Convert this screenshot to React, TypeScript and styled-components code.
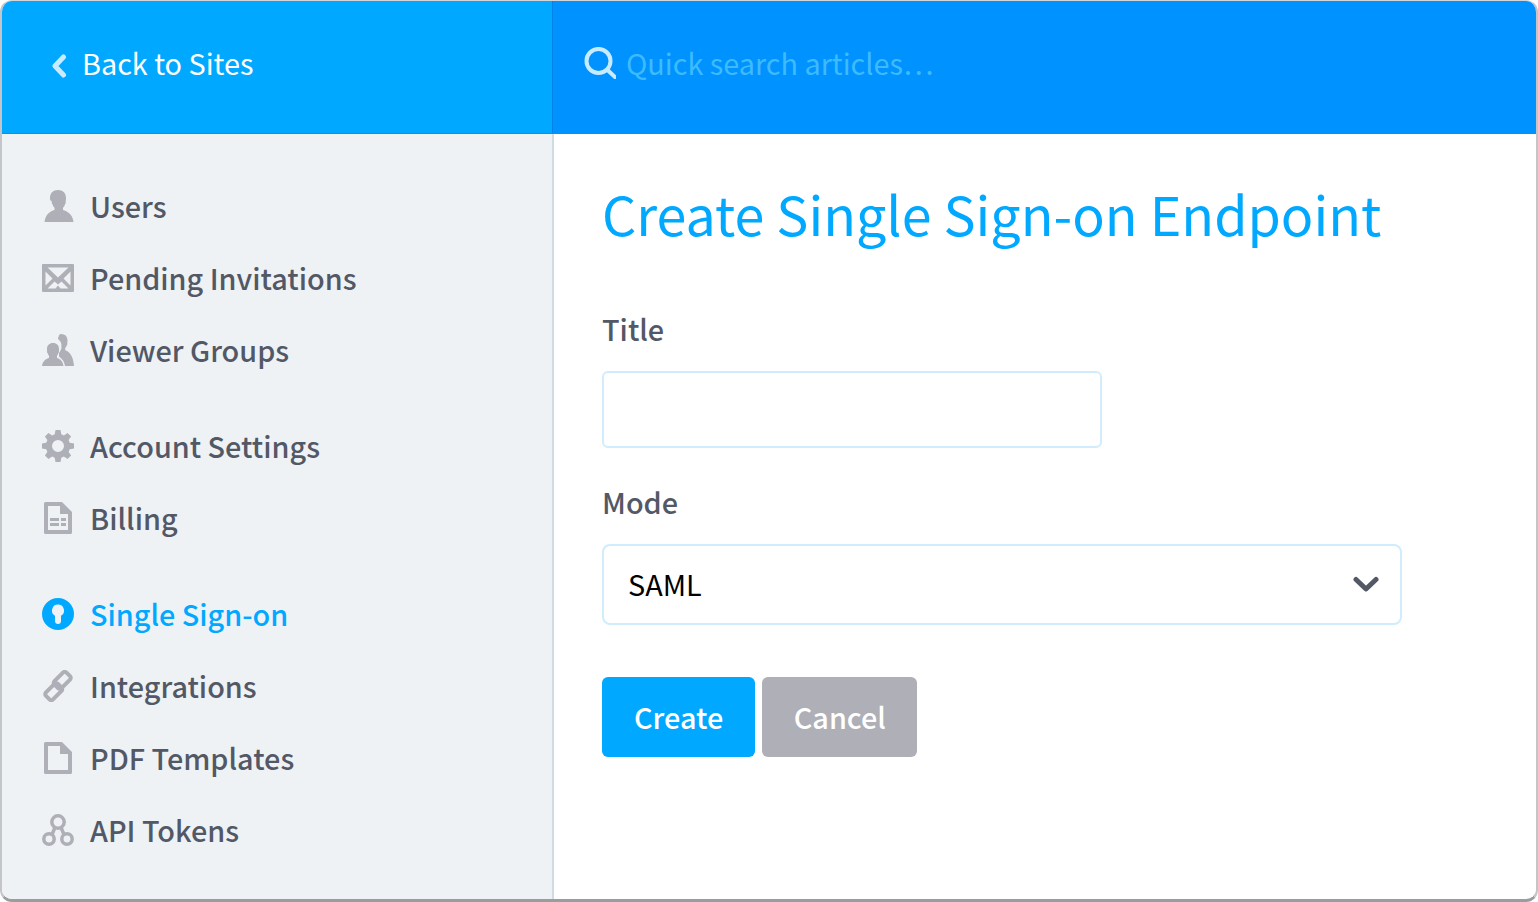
import React from 'react';
import styled, { createGlobalStyle } from 'styled-components';

const GlobalStyle = createGlobalStyle`
    html, body {
        margin: 0;
        padding: 0;
        background: #ffffff;
    }
    body {
        font-family: "Noto Sans CJK SC", "Noto Sans", sans-serif;
    }
    * {
        box-sizing: border-box;
    }
`

const UserIcon = () => (
    <svg width="32" height="32" viewBox="0 0 32 32" fill="currentColor">
        <path d="M16 0c5 0 8 3.200 8 8 0 1.500 0 2.600-.5 3.600.5.600.4 2-.5 2.700-.4 1.500-1 2.600-2 3.500v2.200c4 1 9.700 4.300 10.500 12H2.500C3.300 24.300 8.500 21 12.500 20v-2.200c-1-.9-1.600-2-2-3.500-.9-.7-1-2.100-.5-2.700C8 10.600 8 9.500 8 8c0-4.800 3-8 8-8z"/>
    </svg>
);

const MailIcon = () => (
    <svg width="32" height="28" viewBox="0 0 32 28" fill="currentColor">
        <path fillRule="evenodd" d="M1 0h30a1 1 0 0 1 1 1v26a1 1 0 0 1-1 1H1a1 1 0 0 1-1-1V1a1 1 0 0 1 1-1zm4.500 3.500L16 13.500 26.500 3.500zM3.500 7.500V21.500L10.500 14.500zm25 0L21.500 14.500l7 7zM12.500 17.500 5.500 24.500h8l2.500-3 2.500 3h8L19.500 17.500 16 20.500z"/>
    </svg>
);

const UsersIcon = () => (
    <svg width="32" height="32" viewBox="0 0 32 32" fill="currentColor">
        <path d="M19 0c4.200 0 6.500 2.800 6.500 6.500 0 1 0 1.800-.3 2.500.4.500.3 1.600-.4 2.200-.3 1.200-.8 2.100-1.600 2.800v2.300c3.400 1 7.900 4.200 8.800 15.700H23c-.7-4.500-2.500-7-6-9.500v-3.500c.9-1 1.400-2 1.700-3.200.8-.6 1-2 .6-2.800.6-3-.3-6-3.300-8C16.800.700 17.800 0 19 0z"/>
        <path d="M11 9c3.700 0 6 2.500 6 6 0 .8 0 1.500-.2 2.100.4.500.3 1.500-.4 2-.3 1.100-.8 2-1.400 2.600V24c3 .8 5.900 3 6.500 8H0c.6-5 4-7.200 7-8v-2.300c-.7-.6-1.100-1.500-1.400-2.600-.7-.5-.8-1.500-.4-2-.2-.6-.2-1.300-.2-2.100 0-3.500 2.300-6 6-6z"/>
    </svg>
);

const GearIcon = () => (
    <svg width="32" height="32" viewBox="0 0 32 32" fill="currentColor">
        <path fillRule="evenodd" d="M13.500 0h5l.8 4.300 2.600 1.100 3.600-2.500 3.600 3.600-2.500 3.600 1.100 2.600 4.300.8v5l-4.300.8-1.100 2.600 2.500 3.600-3.600 3.600-3.600-2.500-2.600 1.100-.8 4.300h-5l-.8-4.300-2.600-1.100-3.600 2.500-3.600-3.600 2.500-3.600-1.100-2.600L0 18.500v-5l4.300-.8 1.100-2.600-2.500-3.600 3.600-3.600 3.600 2.500 2.600-1.100zM16 10a6 6 0 1 0 0 12 6 6 0 0 0 0-12z"/>
    </svg>
);

const BillingIcon = () => (
    <svg width="28" height="32" viewBox="0 0 28 32" fill="currentColor">
        <path fillRule="evenodd" d="M1.500 0H18l10 10v20.500a1.500 1.500 0 0 1-1.500 1.500h-25A1.500 1.500 0 0 1 0 30.500v-29A1.500 1.500 0 0 1 1.500 0zM4 4v24h20V12h-8V4zm2 12h9v3H6zm11 0h5v3h-5zM6 21h9v3H6zm11 0h5v3h-5z"/>
    </svg>
);

const KeyholeIcon = () => (
    <svg width="32" height="32" viewBox="0 0 32 32" fill="currentColor">
        <path fillRule="evenodd" d="M16 0a16 16 0 1 1 0 32 16 16 0 0 1 0-32zm0 6.500a6 6 0 0 0-3 11.200v5.300a3 3 0 0 0 6 0v-5.300a6 6 0 0 0-3-11.200z"/>
    </svg>
);

const LinkIcon = () => (
    <svg width="32" height="32" viewBox="0 0 32 32" fill="none" stroke="currentColor" strokeWidth="4">
        <g transform="translate(16 16) rotate(-45)">
            <rect x="-1.500" y="-6" width="17" height="10" rx="2.500"/>
            <rect x="-15.500" y="-4" width="17" height="10" rx="2.500"/>
        </g>
    </svg>
);

const PageIcon = () => (
    <svg width="28" height="32" viewBox="0 0 28 32" fill="currentColor">
        <path fillRule="evenodd" d="M1.500 0H18l10 10v20.500a1.500 1.500 0 0 1-1.500 1.500h-25A1.500 1.500 0 0 1 0 30.500v-29A1.500 1.500 0 0 1 1.500 0zM4 4v24h20V12h-8V4z"/>
    </svg>
);

const NodesIcon = () => (
    <svg width="32" height="32" viewBox="0 0 32 32" fill="none" stroke="currentColor" strokeWidth="3.500">
        <circle cx="16" cy="8" r="6.200"/>
        <circle cx="7" cy="25" r="5.200"/>
        <circle cx="25" cy="25" r="5.200"/>
        <path d="M13 13.500 10 20.500M19 13.500l3 7"/>
    </svg>
);

const BackIcon = () => (
    <svg width="16" height="24" viewBox="0 0 16 24" fill="none" stroke="#c9ebff" strokeWidth="5" strokeLinecap="round" strokeLinejoin="round">
        <path d="M12.500 3 4 12l8.500 9"/>
    </svg>
);

const SearchIcon = () => (
    <svg width="32" height="32" viewBox="0 0 32 32" fill="none" stroke="#c9ebff" strokeWidth="4" strokeLinecap="round">
        <circle cx="14.500" cy="14" r="12"/>
        <path d="m23.500 23 7.500 7"/>
    </svg>
);

const SelectArrow = () => (
    <svg width="26" height="16" viewBox="0 0 26 16" fill="none" stroke="#535866" strokeWidth="5" strokeLinecap="round" strokeLinejoin="round">
        <path d="M3 3.500 13 13 23 3.500"/>
    </svg>
);

const navGroups = [
    [
        { label: 'Users', icon: <UserIcon /> },
        { label: 'Pending Invitations', icon: <MailIcon /> },
        { label: 'Viewer Groups', icon: <UsersIcon /> },
    ],
    [
        { label: 'Account Settings', icon: <GearIcon /> },
        { label: 'Billing', icon: <BillingIcon /> },
    ],
    [
        { label: 'Single Sign-on', icon: <KeyholeIcon />, active: true },
        { label: 'Integrations', icon: <LinkIcon /> },
        { label: 'PDF Templates', icon: <PageIcon /> },
        { label: 'API Tokens', icon: <NodesIcon /> },
    ],
];

function App() {
    return (
        <>
            <GlobalStyle />
            <Frame>
                <TopBar>
                    <BackPanel>
                        <BackIcon />
                        <BackLabel>Back to Sites</BackLabel>
                    </BackPanel>
                    <SearchPanel>
                        <SearchIcon />
                        <SearchInput placeholder="Quick search articles…" readOnly />
                    </SearchPanel>
                </TopBar>
                <Body>
                    <Sidebar>
                        {navGroups.map((group, i) => (
                            <NavGroup key={i}>
                                {group.map(item => (
                                    <NavItem key={item.label} $active={item.active}>
                                        <IconSlot $active={item.active}>{item.icon}</IconSlot>
                                        <NavLabel>{item.label}</NavLabel>
                                    </NavItem>
                                ))}
                            </NavGroup>
                        ))}
                    </Sidebar>
                    <Content>
                        <Title>Create Single Sign-on Endpoint</Title>
                        <FieldLabel>Title</FieldLabel>
                        <TextInput />
                        <FieldLabel>Mode</FieldLabel>
                        <SelectBox>
                            SAML
                            <SelectArrow />
                        </SelectBox>
                        <Actions>
                            <Button $kind="primary">Create</Button>
                            <Button $kind="cancel">Cancel</Button>
                        </Actions>
                    </Content>
                </Body>
            </Frame>
        </>
    );
}

const Frame = styled.div`
    display: flex;
    flex-direction: column;
    width: 1538px;
    height: 902px;
    border-style: solid;
    border-width: 1px 2px 3px 2px;
    border-color: #d4d5d8 #c4c5c8 #9a9ca0 #c4c5c8;
    border-radius: 12px;
    overflow: hidden;
    background: #ffffff;
`
const TopBar = styled.header`
    display: flex;
    flex: none;
    height: 133px;
    border-bottom: 1px solid #0093ff;
`
const BackPanel = styled.div`
    display: flex;
    align-items: center;
    gap: 15px;
    width: 550px;
    padding-left: 49px;
    padding-bottom: 3px;
    background: #00a9ff;
`
const BackLabel = styled.span`
    color: #ffffff;
    font-size: 28.8px;
    line-height: 36px;
    padding-bottom: 6px;
`
const SearchPanel = styled.div`
    display: flex;
    flex: 1;
    align-items: center;
    gap: 10px;
    padding-left: 31px;
    padding-bottom: 8px;
    background: #0093ff;
    border-left: 1px solid #0083e6;
`
const SearchInput = styled.input`
    flex: 1;
    height: 40px;
    border: 0;
    outline: 0;
    padding: 0 0 1px;
    background: transparent;
    color: #ffffff;
    font-family: inherit;
    font-size: 28.8px;
    &::placeholder {
        color: #3dbbfd;
        opacity: 1;
    }
`
const Body = styled.div`
    display: flex;
    flex: 1;
    min-height: 0;
`
const Sidebar = styled.nav`
    flex: none;
    width: 552px;
    padding: 36px 0 0 40px;
    background: #eef2f5;
    border-right: 2px solid #d0dce4;
`
const NavGroup = styled.div`
    margin-bottom: 24px;
`
const NavItem = styled.div<{ $active?: boolean }>`
    display: flex;
    align-items: center;
    gap: 16px;
    height: 72px;
    color: ${({ $active }) => ($active ? '#00a9ff' : '#535866')};
    font-size: 28.8px;
    font-weight: 500;
`
const NavLabel = styled.span`
    line-height: 36px;
`
const IconSlot = styled.span<{ $active?: boolean }>`
    display: flex;
    flex: none;
    align-items: center;
    justify-content: center;
    width: 32px;
    height: 32px;
    color: ${({ $active }) => ($active ? '#00a9ff' : '#aeafb7')};
`
const Content = styled.main`
    flex: 1;
    padding: 41px 0 0 48px;
`
const Title = styled.h1`
    margin: 0 0 58px;
    color: #00a9ff;
    font-size: 53.8px;
    font-weight: 400;
    line-height: 76px;
`
const FieldLabel = styled.label`
    display: block;
    margin-bottom: 22px;
    color: #535866;
    font-size: 28.8px;
    font-weight: 500;
    line-height: 40px;
`
const TextInput = styled.input`
    display: block;
    width: 500px;
    height: 77px;
    margin-bottom: 34px;
    border: 2px solid #d0ecfd;
    border-radius: 6px;
    outline: 0;
    background: #ffffff;
`
const SelectBox = styled.div`
    display: flex;
    align-items: center;
    justify-content: space-between;
    width: 800px;
    height: 81px;
    margin-bottom: 52px;
    padding: 0 21px 2px 24px;
    border: 2px solid #d0ecfd;
    border-radius: 8px;
    color: #000000;
    font-size: 28.8px;
`
const Actions = styled.div`
    display: flex;
    gap: 7px;
`
const Button = styled.button<{ $kind: 'primary' | 'cancel' }>`
    height: 80px;
    padding: 0 ${({ $kind }) => ($kind === 'primary' ? '32px' : '31.5px')} 2px;
    border: 0;
    border-radius: 6px;
    background: ${({ $kind }) => ($kind === 'primary' ? '#00a9ff' : '#aeafb7')};
    color: #ffffff;
    font-family: inherit;
    font-size: 28.8px;
    font-weight: 500;
`

export default App;
